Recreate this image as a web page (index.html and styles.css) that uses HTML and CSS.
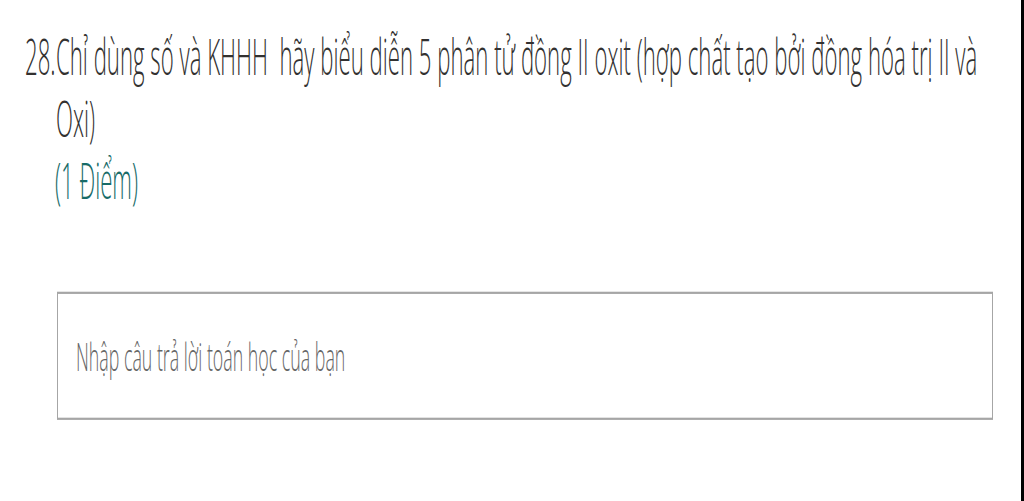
FILE: index.html
```html
<!DOCTYPE html>
<html lang="vi">

<head>
    <meta charset="UTF-8">
    <meta name="viewport" content="width=device-width, initial-scale=1.0">
    <title>Câu hỏi 28</title>
    <link rel="stylesheet" href="styles.css">
</head>

<body>
    <div class="khung">
        <div class="keo-dai">
            <div class="cau-hoi">
                <div class="tieu-de">
                    <span class="so-thu-tu">28.</span>
                    <span class="noi-dung">Chỉ dùng số và KHHH&nbsp; hãy biểu diễn 5 phân tử đồng II oxit (hợp chất tạo bởi đồng hóa trị II và<br>Oxi)</span>
                </div>
                <div class="diem">(1 Điểm)</div>
            </div>
            <div class="tra-loi">
                <input type="text" class="o-nhap" placeholder="Nhập câu trả lời toán học của bạn">
            </div>
        </div>
    </div>
</body>

</html>
```

FILE: styles.css
```css
html,
body {
    margin: 0;
    height: 100%;
    overflow: hidden;
    background-color: #fff;
}

body {
    font-family: "Open Sans", "Noto Sans", sans-serif;
    font-weight: 300;
}

.khung {
    height: 100vh;
    box-sizing: border-box;
    border-right: 3px solid #000;
    overflow: hidden;
}

/* anh goc bi keo gian theo chieu doc */
.keo-dai {
    transform: scaleY(2.21);
    transform-origin: 0 0;
}

.cau-hoi {
    padding: 12px 0 0 25px;
}

.tieu-de {
    display: flex;
    font-size: 22.2px;
    line-height: 28px;
    color: #323130;
}

.so-thu-tu {
    width: 31px;
    flex-shrink: 0;
}

.noi-dung {
    white-space: nowrap;
}

.diem {
    margin-left: 30px;
    font-size: 22.2px;
    line-height: 28px;
    color: #176b68;
}

.tra-loi {
    padding: 36px 0 0 57px;
}

.o-nhap {
    display: block;
    width: 936px;
    height: 58px;
    box-sizing: border-box;
    margin: 0;
    padding: 0 18px;
    border: 1px solid #a6a6a6;
    border-radius: 0;
    font-family: "Open Sans", "Noto Sans", sans-serif;
    font-weight: 300;
    font-size: 17.8px;
    color: #323130;
    background-color: #fff;
    outline: none;
}

.o-nhap::placeholder {
    color: #666;
}
```
